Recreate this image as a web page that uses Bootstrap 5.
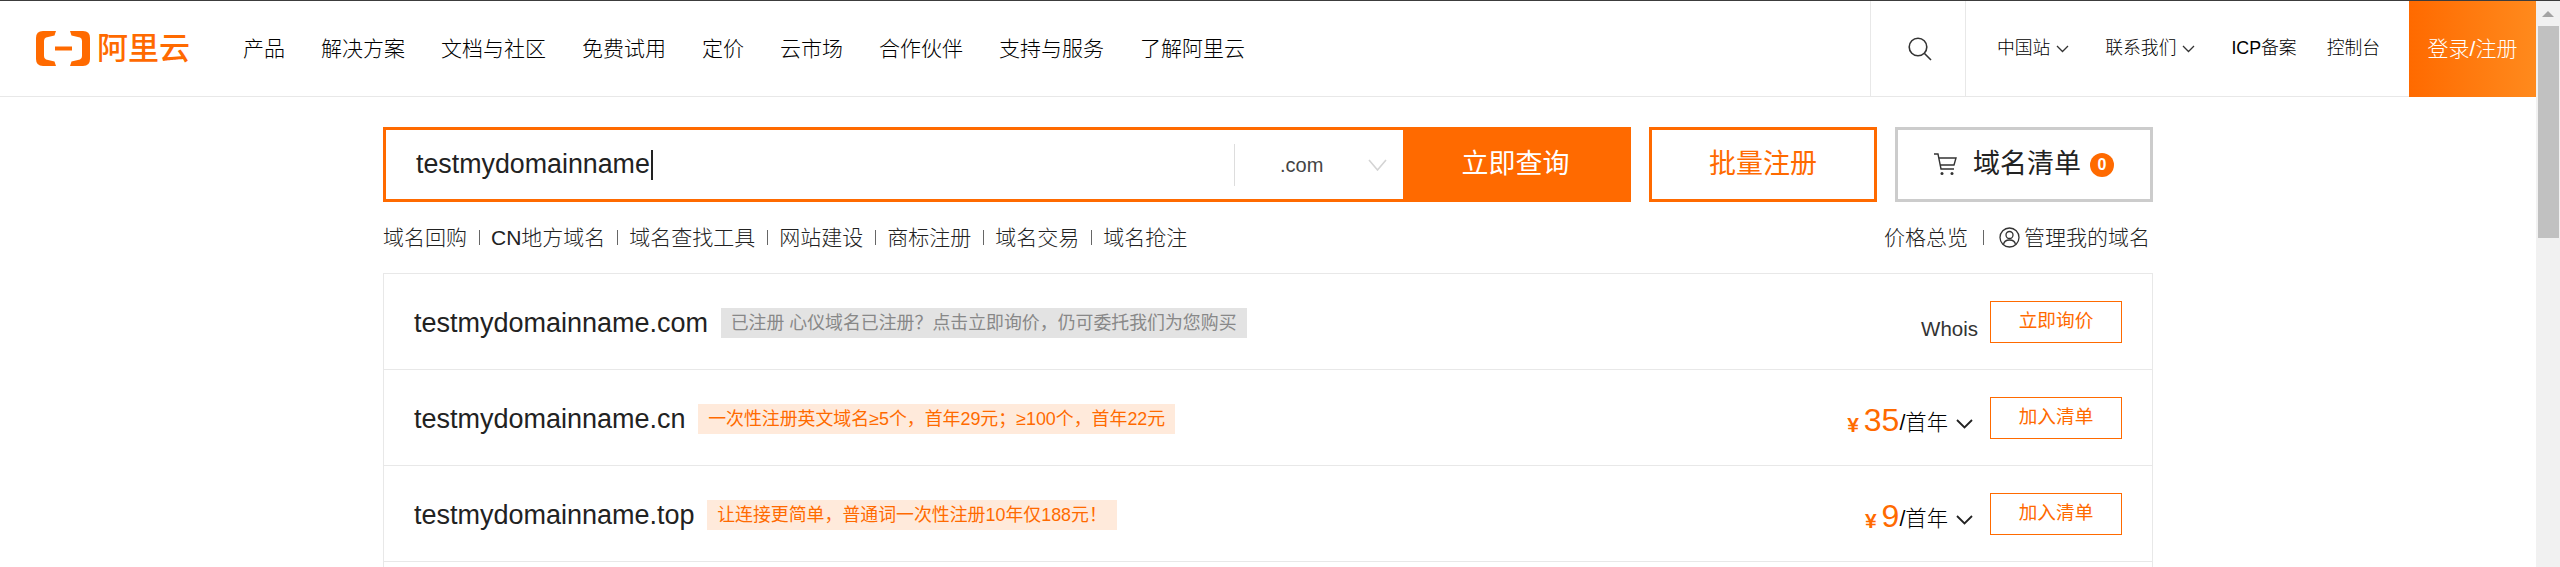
<!DOCTYPE html>
<html lang="zh-CN">
<head>
<meta charset="utf-8">
<title>阿里云 域名注册</title>
<link href="https://cdn.jsdelivr.net/npm/bootstrap@5.3.0/dist/css/bootstrap.min.css" rel="stylesheet">
<style>
:root{--ali:#ff6a00;--line:#e8e8e8;}
html,body{height:567px;overflow:hidden;}
body{font-family:"Liberation Sans","Noto Sans CJK SC",sans-serif;color:#333;background:#fff;font-size:21px;}
.topline{height:1px;background:#3c3c3c;}
.shell{height:566px;overflow:hidden;}
.rail{width:24px;background:#f1f1f1;}
.rail-up{width:0;height:0;margin:10px auto 0;border-left:6px solid transparent;border-right:6px solid transparent;border-bottom:6px solid #a3a3a3;}
.rail-thumb{width:21px;height:212px;margin:9px 1px 0 2px;background:#c1c1c1;}
.main-col{min-width:0;}
.hdr{height:95px;border-bottom:1px solid var(--line);box-sizing:content-box;}
.logo-wrap{padding-left:36px;width:243px;}
.logo-word{font-size:31px;line-height:35px;font-weight:500;color:var(--ali);margin-left:7px;}
.hnav{gap:36px;color:#000;font-weight:300;}
.hsearch{width:96px;height:95px;margin-right:31px;padding-left:4px;border-left:1px solid var(--line);border-right:1px solid var(--line);}
.hright{font-size:17.8px;color:#000;gap:30px;padding-right:29px;font-weight:300;}
.hdrop{gap:6px;margin-right:6px;}
.login{width:127px;height:96px;margin-bottom:-1px;background:linear-gradient(90deg,#ff6a00,#ff8a1d);color:#fff;font-weight:300;}
.page-wrap{width:1770px;margin:30px auto 0;}
.searchbar{height:75px;gap:18px;}
.sbox{width:1248px;border:3px solid var(--ali);}
.sinput{padding-left:30px;font-size:26.8px;color:#222;}
.caret-bar{display:inline-block;width:2px;height:30px;background:#222;margin-left:1px;}
.ssuffix{width:169px;height:42px;border-left:1px solid #ddd;font-size:20px;color:#444;padding:0 0 0 45px;}
.sgo{width:225px;background:var(--ali);color:#fff;font-size:27px;}
.sbatch{width:228px;border:3px solid var(--ali);color:var(--ali);font-size:27px;}
.scart{width:258px;border:3px solid #ccc;font-size:27px;color:#222;}
.cnt{width:24px;height:24px;border-radius:50%;background:var(--ali);color:#fff;font-size:16px;font-weight:700;margin-left:9px;}
.sublinks{height:71px;padding-right:3px;color:#222;font-weight:300;}
.vbar{display:inline-block;width:1px;height:15px;background:#666;margin:0 11.5px;}
.vbar-wide{margin:0 15px 0 15px;}
.dlist{border-top:1px solid var(--line);}
.drow{height:96px;border:1px solid var(--line);border-top:0;padding:3px 30px 0;}
.dname{font-size:27px;color:#222;margin-right:12.5px;}
.dtag{height:30px;padding:0 10px;font-size:17.9px;}
.dtag-off{background:#e3e3e3;color:#888;}
.dtag-on{background:#ffeadb;color:var(--ali);}
.whois{font-size:20.5px;color:#333;margin:12px 12px 0 0;}
.dprice{margin:10px 17px 0 0;color:#000;font-size:21.33px;font-weight:300;}
.yen{color:var(--ali);font-size:21px;font-weight:700;margin-right:5px;align-self:flex-end;line-height:30px;}
.amount{color:var(--ali);font-size:32px;line-height:36px;margin-top:-8px;font-weight:400;}
.dbtn{width:132px;height:42px;margin-top:-2px;border:1px solid var(--ali);color:var(--ali);font-size:18.67px;padding-bottom:3px;}
</style>
</head>
<body>
<div class="topline"></div>
<div class="shell d-flex">
  <div class="main-col flex-grow-1">
    <header class="hdr d-flex align-items-stretch">
      <div class="logo-wrap d-flex align-items-center flex-shrink-0">
        <svg width="54" height="35" viewBox="0 0 54 35" fill="#ff6a00" aria-hidden="true">
          <path d="M20 0H7Q0 0 0 7V28Q0 35 7 35H20L18.5 30.5 10 28.5Q8 28 8 25V10Q8 7 10 6.5L18.5 4.5Z"/>
          <path d="M34 0H47Q54 0 54 7V28Q54 35 47 35H34L35.5 30.5 44 28.5Q46 28 46 25V10Q46 7 44 6.5L35.5 4.5Z"/>
          <rect x="19" y="15.500" width="17" height="4"/>
        </svg>
        <span class="logo-word">阿里云</span>
      </div>
      <nav class="hnav d-flex align-items-center flex-grow-1">
        <span>产品</span><span>解决方案</span><span>文档与社区</span><span>免费试用</span><span>定价</span><span>云市场</span><span>合作伙伴</span><span>支持与服务</span><span>了解阿里云</span>
      </nav>
      <div class="hsearch d-flex align-items-center justify-content-center flex-shrink-0">
        <svg width="24" height="24" viewBox="0 0 24 24" fill="none" stroke="#333" stroke-width="1.6" aria-hidden="true"><circle cx="10" cy="10" r="8.800"/><path d="M16.500 16.500 23 23"/></svg>
      </div>
      <div class="hright d-flex align-items-center flex-shrink-0">
        <span class="hdrop d-flex align-items-center">中国站<svg width="13" height="8" viewBox="0 0 13 8" fill="none" stroke="#333" stroke-width="1.3" aria-hidden="true"><path d="M1 1l5.500 5.500L12 1"/></svg></span>
        <span class="hdrop d-flex align-items-center">联系我们<svg width="13" height="8" viewBox="0 0 13 8" fill="none" stroke="#333" stroke-width="1.3" aria-hidden="true"><path d="M1 1l5.500 5.500L12 1"/></svg></span>
        <span>ICP备案</span>
        <span>控制台</span>
      </div>
      <div class="login d-flex align-items-center justify-content-center flex-shrink-0">登录/注册</div>
    </header>

    <div class="page-wrap">
      <div class="searchbar d-flex">
        <div class="sbox d-flex">
          <div class="sinput flex-grow-1 d-flex align-items-center"><span>testmydomainname</span><span class="caret-bar"></span></div>
          <div class="ssuffix d-flex align-items-center justify-content-between align-self-center flex-shrink-0">
            <span>.com</span>
            <svg class="me-3" width="19" height="12" viewBox="0 0 19 12" fill="none" stroke="#d4d4d4" stroke-width="1.6" aria-hidden="true"><path d="M1 1l8.500 10L18 1"/></svg>
          </div>
          <div class="sgo d-flex align-items-center justify-content-center flex-shrink-0">立即查询</div>
        </div>
        <div class="sbatch d-flex align-items-center justify-content-center">批量注册</div>
        <div class="scart d-flex align-items-center justify-content-center">
          <svg class="me-3" width="23" height="23" viewBox="0 0 23 23" fill="none" stroke="#333" stroke-width="1.4" aria-hidden="true"><path d="M0 1h4l3 15h13M5 5h17l-2 7H6.400"/><circle cx="8" cy="20.500" r="1.500" fill="#333" stroke="none"/><circle cx="18" cy="20.500" r="1.500" fill="#333" stroke="none"/></svg>
          <span>域名清单</span><span class="cnt d-flex align-items-center justify-content-center">0</span>
        </div>
      </div>

      <div class="sublinks d-flex align-items-center justify-content-between">
        <div class="d-flex align-items-center">
          <span>域名回购</span><i class="vbar"></i><span>CN地方域名</span><i class="vbar"></i><span>域名查找工具</span><i class="vbar"></i><span>网站建设</span><i class="vbar"></i><span>商标注册</span><i class="vbar"></i><span>域名交易</span><i class="vbar"></i><span>域名抢注</span>
        </div>
        <div class="d-flex align-items-center">
          <span>价格总览</span><i class="vbar vbar-wide"></i>
          <svg class="me-1" width="21" height="21" viewBox="0 0 21 21" fill="none" stroke="#333" stroke-width="1.3" aria-hidden="true"><circle cx="10.500" cy="10.500" r="9.500"/><circle cx="10.500" cy="8" r="3.500"/><path d="M4.500 17.500c.6-3.500 3-4.500 6-4.500s5.400 1 6 4.500"/></svg>
          <span>管理我的域名</span>
        </div>
      </div>

      <div class="dlist">
        <div class="drow d-flex align-items-center">
          <span class="dname">testmydomainname.com</span>
          <span class="dtag dtag-off d-flex align-items-center">已注册 心仪域名已注册？点击立即询价，仍可委托我们为您购买</span>
          <span class="whois ms-auto">Whois</span>
          <span class="dbtn d-flex align-items-center justify-content-center">立即询价</span>
        </div>
        <div class="drow d-flex align-items-center">
          <span class="dname">testmydomainname.cn</span>
          <span class="dtag dtag-on d-flex align-items-center">一次性注册英文域名≥5个，首年29元；≥100个，首年22元</span>
          <span class="dprice ms-auto d-flex align-items-center"><span class="yen">¥</span><span class="amount">35</span><span>/首年</span><svg class="ms-2" width="17" height="10" viewBox="0 0 17 10" fill="none" stroke="#222" stroke-width="1.8" aria-hidden="true"><path d="M1 1l7.500 7.500L16 1"/></svg></span>
          <span class="dbtn d-flex align-items-center justify-content-center">加入清单</span>
        </div>
        <div class="drow d-flex align-items-center">
          <span class="dname">testmydomainname.top</span>
          <span class="dtag dtag-on d-flex align-items-center">让连接更简单，普通词一次性注册10年仅188元！</span>
          <span class="dprice ms-auto d-flex align-items-center"><span class="yen">¥</span><span class="amount">9</span><span>/首年</span><svg class="ms-2" width="17" height="10" viewBox="0 0 17 10" fill="none" stroke="#222" stroke-width="1.8" aria-hidden="true"><path d="M1 1l7.500 7.500L16 1"/></svg></span>
          <span class="dbtn d-flex align-items-center justify-content-center">加入清单</span>
        </div>
        <div class="drow"></div>
      </div>
    </div>
  </div>
  <div class="rail flex-shrink-0">
    <div class="rail-up"></div>
    <div class="rail-thumb"></div>
  </div>
</div>
<script src="https://cdn.jsdelivr.net/npm/bootstrap@5.3.0/dist/js/bootstrap.bundle.min.js"></script>
</body>
</html>
